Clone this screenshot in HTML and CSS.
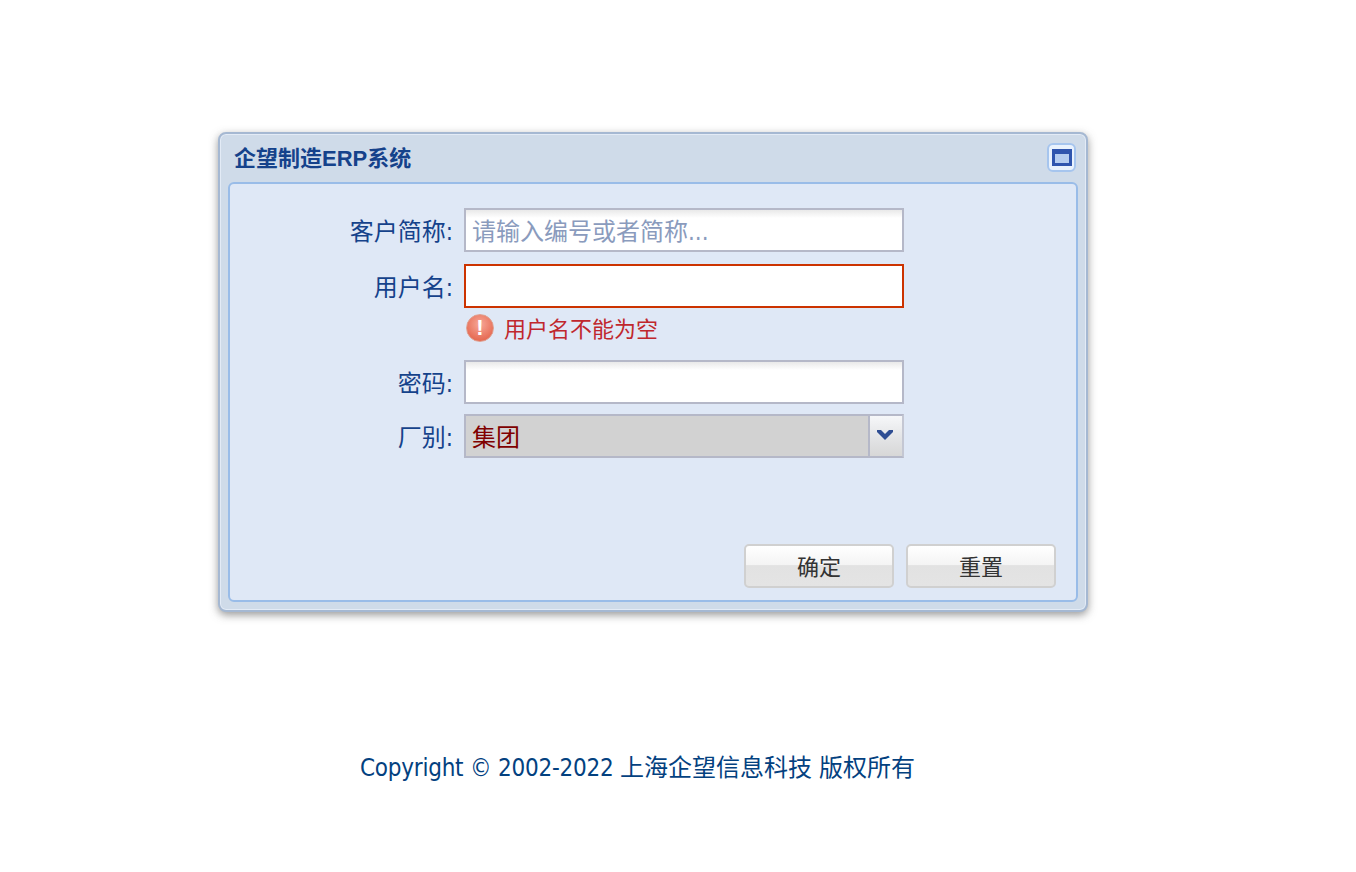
FILE: index.html
```html
<!DOCTYPE html>
<html lang="zh-CN">
  <head>
    <title>企望制造ERP系统</title>
    <meta charset="utf-8" />
    <link rel="stylesheet" href="styles.css">
  </head>

  <body>
    <!-- login window -->
    <div class="window">
      <div class="window-header">
        <span class="window-title">企望制造ERP系统</span>
        <span class="tool-btn">
          <svg viewBox="0 0 20 17" width="20" height="17">
            <rect x="1.5" y="1.5" width="17" height="14" fill="#b5cdf0" stroke="#2f55ae" stroke-width="3"/>
            <rect x="1" y="1" width="18" height="4" fill="#2f55ae"/>
          </svg>
        </span>
      </div>
      <form class="window-body">
        <div class="field">
          <label>客户简称:</label>
          <input class="text-input" type="text" placeholder="请输入编号或者简称...">
        </div>
        <div class="field">
          <label>用户名:</label>
          <input class="text-input invalid" type="text">
        </div>
        <div class="error-row">
          <span class="error-icon">!</span>
          <span class="error-text">用户名不能为空</span>
        </div>
        <div class="field field-tight">
          <label>密码:</label>
          <input class="text-input" type="password">
        </div>
        <div class="field">
          <label>厂别:</label>
          <div class="combo">
            <span class="combo-value">集团</span>
            <span class="combo-trigger">
              <svg viewBox="0 0 16 11" width="16" height="11">
                <path d="M0 1h4l4 4 4-4h4v2l-8 8-8-8z" fill="#2f4e93"/>
              </svg>
            </span>
          </div>
        </div>
        <div class="actions">
          <button type="button">确定</button>
          <button type="button">重置</button>
        </div>
      </form>
    </div>

    <p class="copyright"><span class="copyright-en">Copyright © 2002-2022 </span>上海企望信息科技 版权所有</p>
  </body>
</html>
```

FILE: styles.css
```css
body {
  font-family: "DejaVu Sans Condensed", "Noto Sans CJK SC", sans-serif;
  margin: 0;
  background: #fff;
}
.window {
  box-sizing: border-box;
  width: 870px;
  height: 480px;
  margin: 132px 0 0 218px;
  padding: 0 8px 8px;
  background: #cfdbe9;
  border: 2px solid #a5b8d2;
  border-radius: 8px;
  box-shadow: 0 3px 8px rgba(70, 70, 70, .55), inset 0 0 0 1px #e3ebf6;
  display: flex;
  flex-direction: column;
}
.window-header {
  height: 48px;
  flex: none;
  display: flex;
  align-items: center;
  justify-content: space-between;
  padding: 0 2px 0 6px;
}
.window-title {
  margin-bottom: 4px;
  font-family: "Liberation Sans", "Noto Sans CJK SC", sans-serif;
  font-size: 22px;
  font-weight: bold;
  color: #15428b;
}
.tool-btn {
  box-sizing: border-box;
  width: 29px;
  height: 29px;
  margin-bottom: 2px;
  display: flex;
  align-items: center;
  justify-content: center;
  background: #e9f2fd;
  border: 2px solid #a6c5ee;
  border-radius: 6px;
}
.window-body {
  flex: 1;
  box-sizing: border-box;
  padding: 24px 20px 12px 0;
  background: #dfe8f6;
  border: 2px solid #99bce8;
  border-radius: 6px;
  display: flex;
  flex-direction: column;
}
.field {
  display: flex;
  align-items: center;
  height: 44px;
  margin-bottom: 12px;
}
.field-tight {
  margin-bottom: 10px;
}
.field label {
  width: 223px;
  margin-right: 11px;
  margin-bottom: 2px;
  text-align: right;
  font-size: 24px;
  color: #15428b;
}
.text-input {
  box-sizing: border-box;
  width: 440px;
  height: 44px;
  padding: 4px 6px 0;
  font: 24px "DejaVu Sans Condensed", "Noto Sans CJK SC", sans-serif;
  background: linear-gradient(#e9e9e9, #fff 8px);
  border: 2px solid #b5b8c8;
  outline: none;
}
.text-input::placeholder {
  color: #8a9bbd;
  opacity: 1;
}
.text-input.invalid {
  background: #fff;
  border-color: #cc3300;
}
.error-row {
  display: flex;
  align-items: center;
  gap: 10px;
  height: 28px;
  margin: -6px 0 18px 236px;
  font-size: 22px;
  color: #c0272d;
}
.error-text {
  margin-bottom: 2px;
}
.error-icon {
  width: 28px;
  height: 28px;
  border-radius: 50%;
  box-sizing: border-box;
  border: 1px solid #dfa090;
  background: radial-gradient(circle at 50% 35%, #f7a899, #e5674f 80%);
  color: #fff;
  font: bold 22px/26px "Liberation Sans", sans-serif;
  text-align: center;
}
.combo {
  box-sizing: border-box;
  width: 440px;
  height: 44px;
  display: flex;
  border: 2px solid #b5b8c8;
  border-right-color: #c4c7d3;
  background: #d2d2d2;
}
.combo-value {
  flex: 1;
  padding-left: 6px;
  font-size: 24px;
  line-height: 44px;
  height: 40px;
  color: #800000;
}
.combo-trigger {
  width: 34px;
  padding: 13px 0 0 7px;
  box-sizing: border-box;
  border-left: 2px solid #b5b8c8;
  background: linear-gradient(#f6f7f9, #e3e4e6 55%, #d7d7d7);
}
.combo-trigger svg {
  display: block;
}
.actions {
  margin-top: auto;
  display: flex;
  justify-content: flex-end;
  gap: 12px;
}
button {
  box-sizing: border-box;
  width: 150px;
  height: 44px;
  padding: 0 0 2px;
  font: 22px "DejaVu Sans Condensed", "Noto Sans CJK SC", sans-serif;
  color: #333;
  background: linear-gradient(#fff, #f4f4f4 47%, #e2e2e2 49%, #e4e4e4);
  border: 2px solid #d0d0d0;
  border-radius: 5px;
}
.copyright {
  margin: 138px 0 0 360px;
  font-size: 24px;
  line-height: 36px;
  color: #03417f;
}
.copyright-en {
  letter-spacing: -0.24px;
}
```
